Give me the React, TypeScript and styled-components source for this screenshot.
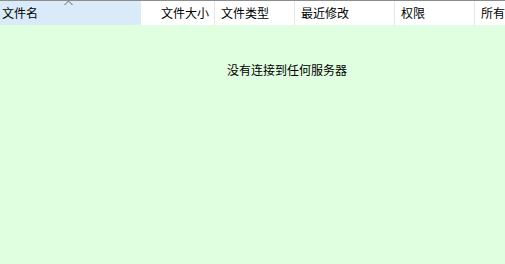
import React from 'react'
import styled, { createGlobalStyle } from 'styled-components'

const GlobalStyle = createGlobalStyle`
  html, body {
    margin: 0;
    padding: 0;
    width: 505px;
    height: 264px;
    overflow: hidden;
    background: #e0fee0;
  }
  body {
    font-family: "Noto Sans CJK SC", "Noto Sans", sans-serif;
    font-size: 12px;
    color: #000;
  }
`

const ListView = styled.div`
  width: 574px;
  height: 264px;
  display: flex;
  flex-direction: column;
  background: #e0fee0;
  border-top: 1px solid #8c8c8c;
`

const HeaderRow = styled.div`
  display: flex;
  height: 24px;
  background: #ffffff;
`

type CellProps = { $w: number; $right?: boolean; $active?: boolean }
const HeaderCell = styled.div<CellProps>`
  position: relative;
  width: ${({ $w }) => $w}px;
  box-sizing: border-box;
  display: flex;
  align-items: center;
  justify-content: ${({ $right }) => ($right ? 'flex-end' : 'flex-start')};
  padding: 0 5px 0 6px;
  padding-left: ${({ $active }) => ($active ? '2px' : '6px')};
  background: ${({ $active }) => ($active ? '#d9ebf9' : '#ffffff')};
  border-right: 1px solid ${({ $active }) => ($active ? '#d9ebf9' : '#e5e5e5')};
  white-space: nowrap;
  line-height: 1;
`

const SortArrow = styled.svg`
  position: absolute;
  top: -1px;
  left: 64px;
`

const Empty = styled.div`
  flex: 1;
  display: flex;
  justify-content: center;
  padding-top: 37px;
  line-height: 16px;
`

const columns = [
  { title: '文件名', w: 141, active: true },
  { title: '文件大小', w: 74, right: true },
  { title: '文件类型', w: 80 },
  { title: '最近修改', w: 100 },
  { title: '权限', w: 80 },
  { title: '所有者', w: 99 },
]

export default function App() {
  return (
    <>
      <GlobalStyle />
      <ListView>
        <HeaderRow>
          {columns.map((c) => (
            <HeaderCell key={c.title} $w={c.w} $right={c.right} $active={c.active}>
              {c.active && (
                <SortArrow width="9" height="6" viewBox="0 0 9 6">
                  <path d="M0.5 5 L4.5 1 L8.5 5" fill="none" stroke="#5a6270" strokeWidth="1" />
                </SortArrow>
              )}
              {c.title}
            </HeaderCell>
          ))}
        </HeaderRow>
        <Empty>没有连接到任何服务器</Empty>
      </ListView>
    </>
  )
}
